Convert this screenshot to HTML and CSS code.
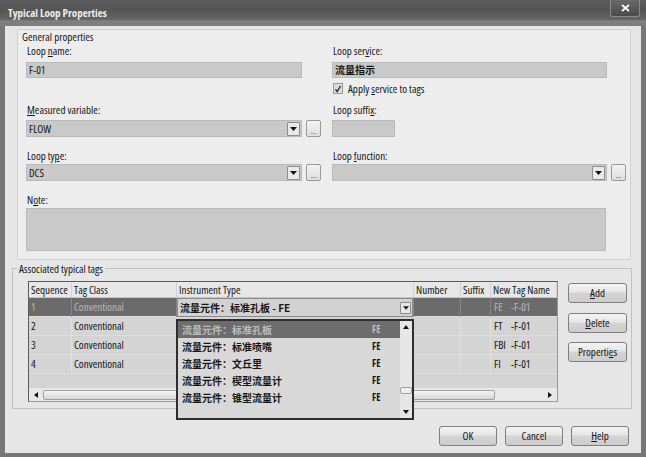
FILE: index.html
```html
<!DOCTYPE html>
<html>
<head>
<meta charset="utf-8">
<title>Typical Loop Properties</title>
<link rel="stylesheet" href="styles.css">
</head>
<body>
<div class="window">
  <div class="titlebar">
    <span class="title">Typical Loop Properties</span>
    <div class="close"><svg width="9" height="8" viewBox="0 0 9 8"><path d="M1 1 L8 7 M8 1 L1 7" stroke="#fff" stroke-width="1.8"/></svg></div>
  </div>
  <div class="client">
    <div class="general">
      <div class="group-title">General properties</div>
      <div class="fields">
        <div class="row row-a">
          <div class="cell">
            <div class="label">Loop <u>n</u>ame:</div>
            <div class="input w-left">F-01</div>
          </div>
          <div class="cell">
            <div class="label">Loop ser<u>v</u>ice:</div>
            <div class="input w-right cjk">流量指示</div>
            <div class="check-row">
              <span class="checkbox"><svg width="8" height="8" viewBox="0 0 8 8"><path d="M1.5 4.3 L3.2 6.6 L6.6 1" stroke="#222" stroke-width="1.3" fill="none"/></svg></span>
              <span>Apply <u>s</u>ervice to tags</span>
            </div>
          </div>
        </div>
        <div class="row row-c">
          <div class="cell">
            <div class="label"><u>M</u>easured variable:</div>
            <div class="combo-row">
              <div class="combo w-left"><span class="combo-text">FLOW</span><span class="drop"><svg width="7" height="4" viewBox="0 0 7 4"><path d="M0 0H7L3.5 4Z" fill="#111"/></svg></span></div>
              <span class="ellipsis">...</span>
            </div>
          </div>
          <div class="cell">
            <div class="label">Loop suffi<u>x</u>:</div>
            <div class="input w-suffix"></div>
          </div>
        </div>
        <div class="row row-d">
          <div class="cell">
            <div class="label">Loop ty<u>p</u>e:</div>
            <div class="combo-row">
              <div class="combo w-left"><span class="combo-text">DCS</span><span class="drop"><svg width="7" height="4" viewBox="0 0 7 4"><path d="M0 0H7L3.5 4Z" fill="#111"/></svg></span></div>
              <span class="ellipsis">...</span>
            </div>
          </div>
          <div class="cell">
            <div class="label">Loop <u>f</u>unction:</div>
            <div class="combo-row">
              <div class="combo w-right"><span class="combo-text"></span><span class="drop"><svg width="7" height="4" viewBox="0 0 7 4"><path d="M0 0H7L3.5 4Z" fill="#111"/></svg></span></div>
              <span class="ellipsis">...</span>
            </div>
          </div>
        </div>
        <div class="row-e">
          <div class="label">N<u>o</u>te:</div>
          <div class="textarea"></div>
        </div>
      </div>
    </div>

    <fieldset class="assoc">
      <legend>Associated typical tags</legend>
      <div class="assoc-body">
        <div class="table">
          <div class="thead">
            <div class="th">Sequence</div>
            <div class="th">Tag Class</div>
            <div class="th">Instrument Type</div>
            <div class="th">Number</div>
            <div class="th">Suffix</div>
            <div class="th">New Tag Name</div>
          </div>
          <div class="trow selected">
            <div class="td">1</div>
            <div class="td">Conventional</div>
            <div class="td edit">
              <div class="cell-combo"><span class="cjk">流量元件：标准孔板 - FE</span><span class="drop small"><svg width="6" height="4" viewBox="0 0 7 4"><path d="M0 0H7L3.5 4Z" fill="#111"/></svg></span></div>
            </div>
            <div class="td"></div>
            <div class="td"></div>
            <div class="td"><span class="pre">FE</span>-F-01</div>
          </div>
          <div class="trow">
            <div class="td">2</div>
            <div class="td">Conventional</div>
            <div class="td"></div>
            <div class="td"></div>
            <div class="td"></div>
            <div class="td"><span class="pre">FT</span>-F-01</div>
          </div>
          <div class="trow">
            <div class="td">3</div>
            <div class="td">Conventional</div>
            <div class="td"></div>
            <div class="td"></div>
            <div class="td"></div>
            <div class="td"><span class="pre">FBI</span>-F-01</div>
          </div>
          <div class="trow">
            <div class="td">4</div>
            <div class="td">Conventional</div>
            <div class="td"></div>
            <div class="td"></div>
            <div class="td"></div>
            <div class="td"><span class="pre">FI</span>-F-01</div>
          </div>
          <div class="filler"></div>
          <div class="hscroll">
            <span class="harrow"><svg width="4" height="6" viewBox="0 0 4 6"><path d="M4 0V6L0 3Z" fill="#111"/></svg></span>
            <div class="htrack"><div class="hthumb"></div></div>
            <span class="harrow"><svg width="4" height="6" viewBox="0 0 4 6"><path d="M0 0V6L4 3Z" fill="#111"/></svg></span>
          </div>

          <div class="droplist">
            <div class="items">
              <div class="item active"><span class="cjk">流量元件：标准孔板</span><span class="code">FE</span></div>
              <div class="item"><span class="cjk">流量元件：标准喷嘴</span><span class="code">FE</span></div>
              <div class="item"><span class="cjk">流量元件：文丘里</span><span class="code">FE</span></div>
              <div class="item"><span class="cjk">流量元件：楔型流量计</span><span class="code">FE</span></div>
              <div class="item"><span class="cjk">流量元件：锥型流量计</span><span class="code">FE</span></div>
            </div>
            <div class="vscroll">
              <span class="varrow"><svg width="6" height="4" viewBox="0 0 6 4"><path d="M0 4H6L3 0Z" fill="#111"/></svg></span>
              <div class="vtrack"><div class="vthumb"></div></div>
              <span class="varrow"><svg width="6" height="4" viewBox="0 0 6 4"><path d="M0 0H6L3 4Z" fill="#111"/></svg></span>
            </div>
          </div>
        </div>
        <div class="side-buttons">
          <div class="btn"><u>A</u>dd</div>
          <div class="btn btn-delete"><u>D</u>elete</div>
          <div class="btn btn-props">Properti<u>e</u>s</div>
        </div>
      </div>
    </fieldset>

    <div class="footer">
      <div class="btn btn-foot">OK</div>
      <div class="btn btn-foot">Cancel</div>
      <div class="btn btn-foot"><u>H</u>elp</div>
    </div>
  </div>
</div>
</body>
</html>
```

FILE: styles.css
```css
* { box-sizing: border-box; }
html, body { margin: 0; padding: 0; }
body {
  width: 646px;
  height: 457px;
  overflow: hidden;
  background: #666;
  font-family: "Open Sans", "Roboto", "Liberation Sans", "Noto Sans CJK SC", sans-serif;
  font-stretch: 80%;
  font-weight: 500;
  font-size: 11px;
  color: #151515;
}
u { text-decoration: underline; text-underline-offset: 1px; }

.window {
  width: 646px;
  height: 457px;
  display: flex;
  flex-direction: column;
  background: #767676;
  padding: 0 5px 4px 5px;
}

.titlebar {
  height: 26px;
  margin: 0 -5px;
  padding: 0 6px 0 8px;
  display: flex;
  justify-content: space-between;
  align-items: flex-start;
  background: linear-gradient(#5c5c5c, #555 40%, #666 75%, #808080 80%, #7c7c7c);
}
.title {
  color: #ececec;
  font-weight: bold;
  font-size: 11px;
  font-stretch: 75%;
  line-height: 14px;
  padding-top: 6px;
}
.close {
  width: 30px;
  height: 17px;
  display: flex;
  align-items: center;
  justify-content: center;
  background: linear-gradient(#6a6a6a, #4a4a4a);
  border: 1px solid #8a8a8a;
  border-top: none;
  border-radius: 0 0 3px 3px;
}

.client {
  flex: 1;
  background: #e6e6e6;
  display: flex;
  flex-direction: column;
}

.general {
  margin: 3px 10px 0 12px;
  height: 231px;
  background: #ededed;
  border: 1px solid #d0d0d0;
  border-radius: 2px;
}
.group-title {
  line-height: 13px;
  padding-left: 4px;
}
.fields { margin-left: 8px; }
.row { display: flex; gap: 11px; }
.cell { width: 294px; }
.cell:first-child { width: 295px; }
.row-a { margin-top: 1px; }
.row-c { margin-top: 9px; }
.row-d { margin-top: 12px; }
.row-e { margin-top: 12px; }

.label {
  line-height: 13px;
  height: 13px;
  white-space: nowrap;
  padding-left: 1px;
}
.input {
  height: 16px;
  margin-top: 5px;
  background: #c9c9c9;
  border: 1px solid #bababa;
  padding-left: 2px;
  line-height: 14px;
}
.row-c .input { margin-top: 4px; height: 17px; }
.w-left { width: 276px; }
.w-right { width: 275px; }
.w-suffix { width: 63px; }

.cjk {
  font-family: "Noto Sans CJK SC", "Open Sans", sans-serif;
  font-stretch: 100%;
  font-weight: bold;
  font-size: 10px;
}
.input.cjk { line-height: 14px; }

.check-row {
  display: flex;
  align-items: center;
  gap: 5px;
  margin-top: 5px;
  height: 11px;
  padding-left: 1px;
  line-height: 11px;
}
.checkbox {
  width: 10px;
  height: 11px;
  background: #dcdcdc;
  border: 1px solid #9a9a9a;
  display: flex;
  align-items: center;
  justify-content: center;
}

.combo-row {
  display: flex;
  align-items: flex-start;
  gap: 4px;
  margin-top: 4px;
}
.row-d .combo-row { margin-top: 2px; }
.combo {
  height: 17px;
  display: flex;
  align-items: center;
  background: #c9c9c9;
  border: 1px solid #bababa;
  padding: 0 1px 0 2px;
}
.combo-text { flex: 1; line-height: 15px; }
.drop {
  width: 13px;
  height: 14px;
  background: #e9e9e9;
  border: 1px solid #8c8c8c;
  border-radius: 1px;
  display: flex;
  align-items: center;
  justify-content: center;
}
.drop.small { width: 11px; height: 12px; }
.ellipsis {
  width: 15px;
  height: 17px;
  background: linear-gradient(#f3f3f3, #dedede);
  border: 1px solid #9a9a9a;
  border-radius: 2px;
  font-size: 8px;
  line-height: 20px;
  text-align: center;
  color: #555;
}

.textarea {
  width: 580px;
  height: 43px;
  margin-top: 2px;
  background: #c9c9c9;
  border: 1px solid #bababa;
}

.assoc {
  margin: 2px 9px 0 7px;
  padding: 0;
  border: 1px solid #c0c0c0;
  min-width: 0;
}
.assoc legend {
  margin-left: 4px;
  padding: 0 2px;
  line-height: 13px;
}
.assoc-body {
  display: flex;
  gap: 10px;
  padding: 6px 4px 6px 15px;
}

.table {
  position: relative;
  width: 530px;
  height: 121px;
  border: 1px solid #5a5a5a;
  border-right-color: #9a9a9a;
  border-bottom-color: #9a9a9a;
  background: #d4d4d4;
  display: flex;
  flex-direction: column;
}
.thead, .trow {
  display: grid;
  grid-template-columns: 43px 105px 237px 47px 30px 66px;
}
.thead {
  height: 16px;
  background: #e7e7e7;
  border-bottom: 1px solid #c4c4c4;
}
.th {
  line-height: 15px;
  padding-left: 2px;
  white-space: nowrap;
  border-right: 1px solid #d2d2d2;
}
.trow {
  height: 19px;
  border-bottom: 1px solid #dddddd;
}
.td {
  line-height: 18px;
  padding-left: 2px;
  white-space: nowrap;
  border-right: 1px solid #e1e1e1;
}
.td:last-child { border-right: none; padding-left: 3px; }
.pre { display: inline-block; width: 17px; }
.trow.selected {
  background: #6b6b6b;
  color: #b9b9b9;
}
.trow.selected .td { border-right-color: #888; }
.td.edit { padding: 0; }
.cell-combo {
  height: 19px;
  background: #d2d2d2;
  border: 1px solid #8a8a8a;
  color: #151515;
  display: flex;
  align-items: center;
  justify-content: space-between;
  padding: 0 1px 0 2px;
}
.filler { flex: 1; }
.hscroll {
  height: 13px;
  display: flex;
  align-items: center;
  background: #e8e8e8;
}
.harrow {
  width: 14px;
  height: 13px;
  display: flex;
  align-items: center;
  justify-content: center;
}
.htrack { flex: 1; height: 13px; display: flex; align-items: center; }
.hthumb {
  width: 452px;
  height: 10px;
  border: 1px solid #a0a0a0;
  border-radius: 2px;
  background: linear-gradient(#f4f4f4, #d6d6d6);
}

.droplist {
  position: absolute;
  left: 147px;
  top: 37px;
  width: 238px;
  height: 101px;
  border: 2px solid #2e2e2e;
  background: #d8d8d8;
  display: flex;
}
.items { flex: 1; }
.item {
  height: 17px;
  display: grid;
  grid-template-columns: 190px auto;
  align-items: center;
  padding-left: 4px;
  line-height: 17px;
}
.item .code { font-weight: bold; font-size: 10px; }
.item.active {
  background: #6d6d6d;
  color: #bcbcbc;
}
.vscroll {
  width: 12px;
  display: flex;
  flex-direction: column;
  background: #e6e6e6;
}
.varrow {
  height: 12px;
  display: flex;
  align-items: center;
  justify-content: center;
}
.vtrack { flex: 1; }
.vthumb {
  margin-top: 54px;
  height: 7px;
  border: 1px solid #a0a0a0;
  border-radius: 2px;
  background: #f0f0f0;
}

.side-buttons {
  display: flex;
  flex-direction: column;
  padding-top: 2px;
}
.btn {
  width: 59px;
  height: 20px;
  line-height: 18px;
  text-align: center;
  border: 1px solid #7f7f7f;
  border-radius: 3px;
  background: linear-gradient(#f4f4f4, #e6e6e6 45%, #d4d4d4 50%, #cdcdcd);
  white-space: nowrap;
}
.btn-delete { margin-top: 10px; }
.btn-props { margin-top: 9px; }

.footer {
  display: flex;
  justify-content: flex-end;
  gap: 8px;
  padding-right: 12px;
  margin-top: 17px;
}
.btn-foot { width: 58px; }
```
